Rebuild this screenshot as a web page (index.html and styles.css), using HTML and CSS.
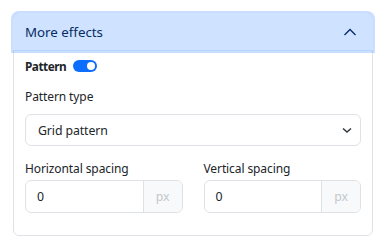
FILE: index.html
```html
<!DOCTYPE html>
<html>
<head>
<meta charset="utf-8">
<link rel="stylesheet" href="styles.css">
</head>
<body>
<div class="card">
  <div class="head">
    <span class="title">More effects</span>
    <svg class="chev" width="14" height="8" viewBox="0 0 14 8"><path d="M1.5 7 L7 1.5 L12.5 7" fill="none" stroke="#052c65" stroke-width="1.3"/></svg>
  </div>
  <div class="body">
    <div class="toggle-row">
      <span class="bold">Pattern</span>
      <span class="switch"><span class="knob"></span></span>
    </div>
    <div class="label">Pattern type</div>
    <div class="select">
      <span>Grid pattern</span>
      <svg width="12" height="7" viewBox="0 0 12 7"><path d="M2 1.5 L6 5 L10 1.5" fill="none" stroke="#343a40" stroke-width="1.6"/></svg>
    </div>
    <div class="grid">
      <div class="field">
        <div class="label">Horizontal spacing</div>
        <div class="group"><span class="val">0</span><span class="addon">px</span></div>
      </div>
      <div class="field">
        <div class="label">Vertical spacing</div>
        <div class="group"><span class="val">0</span><span class="addon">px</span></div>
      </div>
    </div>
  </div>
</div>
</body>
</html>
```
FILE: styles.css
```css
* { box-sizing: border-box; }
html, body { margin: 0; background: #fff; }
body { font-family: "Noto Sans", "Open Sans", sans-serif; font-size: 12px; letter-spacing: -0.1px; color: #212529; padding: 13px 11px 0 13px; }
.card { width: 360px; height: 223px; border: 1px solid #dee2e6; border-radius: 6px; }
.head {
  height: 38px; margin: -1px -1px 0 -1px; background: #cfe2ff; color: #052c65;
  border-radius: 6px 6px 0 0; border-bottom: 1px solid #b6d4fe;
  box-shadow: 0 0 0 2px rgba(13,110,253,0.22);
  display: flex; align-items: center; justify-content: space-between; padding: 0 16px 0 12px;
  font-size: 13.3px; letter-spacing: 0;
}
.chev { display: block; }
.body { padding: 9px 11px 0 11px; }
.toggle-row { display: flex; align-items: center; gap: 7px; height: 12px; }
.bold { font-weight: 700; font-size: 11.8px; letter-spacing: -0.5px; }
.switch { width: 24px; height: 12px; border-radius: 6px; background: #0d6efd; position: relative; display: inline-block; }
.knob { position: absolute; right: 2px; top: 2px; width: 8px; height: 8px; border-radius: 50%; background: #fff; }
.label { margin-top: 16px; height: 18px; line-height: 18px; }
.select {
  margin-top: 8px; height: 32px; border: 1px solid #dee2e6; border-radius: 6px;
  display: flex; align-items: center; justify-content: space-between; padding: 0 7px 0 12px;
  font-size: 12.3px;
}
.grid { display: grid; grid-template-columns: 1fr 1fr; column-gap: 21px; }
.field .label { margin-top: 14px; }
.group { margin-top: 2px; height: 33px; display: flex; border: 1px solid #dee2e6; border-radius: 6px; overflow: hidden; font-size: 12.3px; }
.val { flex: 1; display: flex; align-items: center; padding-left: 11px; }
.addon { width: 39px; border-left: 1px solid #dee2e6; background: #f8f9fa; color: #c4c8cc; display: flex; align-items: center; justify-content: center; }
```
